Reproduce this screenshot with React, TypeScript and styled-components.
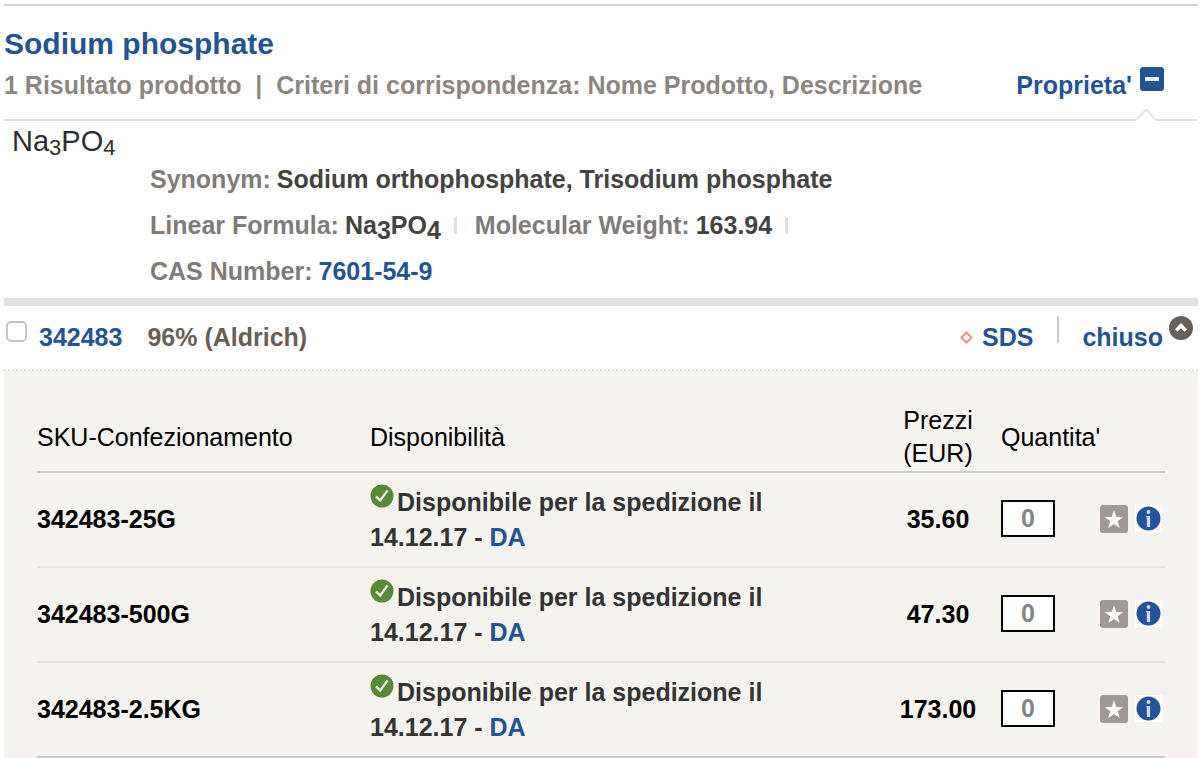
import React from "react";
import styled, { createGlobalStyle } from "styled-components";

const blue = "#1f5597";

const GlobalStyle = createGlobalStyle`
  *, *::before, *::after { box-sizing: border-box; }
  body {
    margin: 0;
    background: #fff;
    color: #000;
    font-family: "Liberation Sans", Arial, Helvetica, sans-serif;
    font-size: 25px;
    line-height: 30px;
  }
`;

const Page = styled.main`
  margin: 4px 2px 0 4px;
  border-top: 2px solid #d2d2d2;
`;

const Header = styled.header`
  position: relative;
  padding: 20px 34px 19px 0;
  border-bottom: 2px solid #e0e0df;
`;

const Title = styled.h1`
  margin: 0 0 8px;
  font-size: 30px;
  line-height: 36px;
  color: ${blue};
`;

const SummaryRow = styled.div`
  display: flex;
  justify-content: space-between;
  align-items: flex-start;
`;

const Summary = styled.p`
  margin: 0;
  font-weight: bold;
  color: #8b8682;
  white-space: pre-wrap;
`;

const Link = styled.a`
  color: ${blue};
  font-weight: bold;
  text-decoration: none;
`;

const ToggleButton = styled.button<{ $gap: number; $lift: number }>`
  display: flex;
  align-items: flex-start;
  gap: ${(p) => p.$gap}px;
  padding: 0;
  border: 0;
  background: none;
  font: inherit;
  font-weight: bold;
  color: ${blue};
  cursor: pointer;

  svg {
    flex: none;
    margin-top: -${(p) => p.$lift}px;
  }
`;

const Notch = styled.svg`
  position: absolute;
  right: 42px;
  bottom: -2px;
`;

const Properties = styled.section`
  display: flex;
  padding-bottom: 12px;
  border-bottom: 8px solid #e1e0de;
`;

const Structure = styled.div`
  flex: none;
  width: 146px;
  padding: 4px 0 0 8px;
  font-size: 29px;
  line-height: 32px;
  color: #2d2d2d;

  sub {
    font-size: 22px;
    line-height: 0;
    vertical-align: -4px;
  }
`;

const PropertyList = styled.dl`
  display: flex;
  flex-direction: column;
  gap: 16px;
  margin: 0;
  padding-top: 43px;
  font-weight: bold;
`;

const PropertyLine = styled.div`
  display: flex;
  align-items: center;
`;

const Property = styled.div`
  display: flex;
  gap: 6px;

  dt { color: #7f7b78; }
  dd { margin: 0; color: #454341; }
  sub {
    font-size: 25px;
    line-height: 0;
    vertical-align: -5px;
  }
`;

const Divider = styled.span`
  width: 3px;
  height: 17px;
  margin: 0 18px 0 13px;
  background: #e0e0e0;
`;

const ProductBar = styled.section`
  display: flex;
  align-items: flex-start;
  justify-content: space-between;
  padding: 16px 5px 17px 2px;
  border-bottom: 2px dotted #e0dfdb;
`;

const ProductName = styled.div`
  display: flex;
  align-items: flex-start;
`;

const Checkbox = styled.input`
  appearance: none;
  width: 21px;
  height: 21px;
  margin: -1px 12px 0 0;
  border: 2px solid #c4c4c4;
  border-radius: 5px;
  background: #fff;
`;

const Grade = styled.span`
  margin-left: 25px;
  font-weight: bold;
  color: #665e57;
`;

const ProductActions = styled.div`
  display: flex;
  align-items: flex-start;
`;

const Diamond = styled.svg`
  margin: 9px 9px 0 0;
`;

const Rule = styled.span`
  width: 2px;
  height: 27px;
  margin: -6px 23px 0 24px;
  background: #cbcbcb;
`;

const Offers = styled.section`
  padding: 33px 33px 0;
  background: #f4f3ef;
`;

const Table = styled.table`
  width: 100%;
  table-layout: fixed;
  border-spacing: 0;
`;

const Col = styled.col<{ $width?: number }>`
  width: ${(p) => (p.$width ? `${p.$width}px` : "auto")};
`;

const HeadCell = styled.th<{ $center?: boolean; $indent?: number }>`
  padding: 0 0 1px ${(p) => p.$indent ?? 0}px;
  border-bottom: 2px solid #cacaca;
  font-weight: normal;
  line-height: 33px;
  text-align: ${(p) => (p.$center ? "center" : "left")};
`;

const Row = styled.tr`
  height: 95px;

  td { border-bottom: 2px solid #e5e4e2; }
  &:last-child td { border-bottom-color: #cacaca; }
`;

const Cell = styled.td<{ $center?: boolean; $indent?: number }>`
  padding: 0 0 2px ${(p) => p.$indent ?? 0}px;
  font-weight: bold;
  text-align: ${(p) => (p.$center ? "center" : "left")};
`;

const Availability = styled(Cell)`
  padding: 0;
  line-height: 35px;
  color: #333;

  svg {
    margin-right: 3px;
    vertical-align: 3px;
  }
`;

const AvailabilityLine = styled.div`
  white-space: nowrap;
`;

const Quantity = styled.input`
  display: block;
  width: 54px;
  height: 37px;
  padding: 0;
  border: 2px solid #000;
  border-radius: 0;
  background: #fff;
  color: #858585;
  font: inherit;
  text-align: center;
`;

const RowTools = styled.div`
  display: flex;
  align-items: center;
  gap: 7px;
`;

const IconButton = styled.button`
  display: block;
  padding: 0;
  border: 0;
  background: none;
  cursor: pointer;

  svg { display: block; }
`;

const MinusIcon = () => (
  <svg width="24" height="24" viewBox="0 0 24 24" aria-hidden="true">
    <rect width="24" height="24" rx="3" fill={blue} />
    <rect x="5" y="10" width="14" height="4" rx="0.5" fill="#e9eef5" />
  </svg>
);

const CollapseIcon = () => (
  <svg width="24" height="24" viewBox="0 0 24 24" aria-hidden="true">
    <circle cx="12" cy="12" r="12" fill="#675f59" />
    <path d="M7.2 14.6 12 9.6l4.8 5" fill="none" stroke="#fff" strokeWidth="3.6" />
  </svg>
);

const CheckIcon = () => (
  <svg width="24" height="24" viewBox="0 0 24 24" role="img" aria-label="Disponibile">
    <circle cx="12" cy="12" r="11.5" fill="#578a32" />
    <path d="M6 12.300l4.200 4.200L17.600 6.400" fill="none" stroke="#e9f0e0" strokeWidth="2.4" />
  </svg>
);

const StarIcon = () => (
  <svg width="28" height="28" viewBox="0 0 28 28" aria-hidden="true">
    <rect width="28" height="28" rx="3" fill="#a09a96" />
    <path
      d="M14 5.200l2.300 6.700 6.900.1-5.500 4.200 2 6.800L14 19l-5.700 4 2-6.800-5.500-4.200 6.900-.1z"
      fill="#fff"
    />
  </svg>
);

const InfoIcon = () => (
  <svg width="27" height="27" viewBox="0 0 27 27" aria-hidden="true">
    <rect width="27" height="27" fill="#fff" />
    <circle cx="13.500" cy="13.500" r="12" fill="#24539d" />
    <circle cx="13.500" cy="7" r="1.900" fill="#d3dded" />
    <path d="M11.300 11h3.800v11h-3.200v-9.400h-.6z" fill="#d3dded" />
  </svg>
);

const offers = [
  { sku: "342483-25G", price: "35.60" },
  { sku: "342483-500G", price: "47.30" },
  { sku: "342483-2.5KG", price: "173.00" },
];

const Formula = () => (
  <>
    Na<sub>3</sub>PO<sub>4</sub>
  </>
);

export default function App() {
  return (
    <>
      <GlobalStyle />
      <Page>
        <Header>
          <Title>Sodium phosphate</Title>
          <SummaryRow>
            <Summary>
              {"1 Risultato prodotto  |  Criteri di corrispondenza: Nome Prodotto, Descrizione"}
            </Summary>
            <ToggleButton type="button" $gap={8} $lift={3}>
              Proprieta'
              <MinusIcon />
            </ToggleButton>
          </SummaryRow>
          <Notch width="20" height="13" viewBox="0 0 20 13" aria-hidden="true">
            <path d="M0 11 10 1l10 10v2H0z" fill="#fff" />
            <path d="M0.500 11.500 10 1.500l9.500 10" fill="none" stroke="#dcdcda" strokeWidth="1.500" />
          </Notch>
        </Header>

        <Properties>
          <Structure>
            <Formula />
          </Structure>
          <PropertyList>
            <PropertyLine>
              <Property>
                <dt>Synonym:</dt>
                <dd>Sodium orthophosphate, Trisodium phosphate</dd>
              </Property>
            </PropertyLine>
            <PropertyLine>
              <Property>
                <dt>Linear Formula:</dt>
                <dd>
                  <Formula />
                </dd>
              </Property>
              <Divider />
              <Property>
                <dt>Molecular Weight:</dt>
                <dd>163.94</dd>
              </Property>
              <Divider />
            </PropertyLine>
            <PropertyLine>
              <Property>
                <dt>CAS Number:</dt>
                <dd>
                  <Link href="#cas">7601-54-9</Link>
                </dd>
              </Property>
            </PropertyLine>
          </PropertyList>
        </Properties>

        <ProductBar>
          <ProductName>
            <Checkbox type="checkbox" id="product" aria-labelledby="product-number" />
            <Link href="#product" id="product-number">
              342483
            </Link>
            <Grade>96% (Aldrich)</Grade>
          </ProductName>
          <ProductActions>
            <Diamond width="13" height="13" viewBox="0 0 13 13" aria-hidden="true">
              <path d="M6.500 1.500l5 5-5 5-5-5z" fill="#fff" stroke="#f58b87" strokeWidth="2" />
            </Diamond>
            <Link href="#sds">SDS</Link>
            <Rule />
            <ToggleButton type="button" $gap={6} $lift={6}>
              chiuso
              <CollapseIcon />
            </ToggleButton>
          </ProductActions>
        </ProductBar>

        <Offers>
          <Table>
            <colgroup>
              <Col $width={333} />
              <Col />
              <Col $width={100} />
              <Col $width={112} />
              <Col $width={65} />
            </colgroup>
            <thead>
              <tr>
                <HeadCell scope="col">SKU-Confezionamento</HeadCell>
                <HeadCell scope="col">Disponibilità</HeadCell>
                <HeadCell scope="col" $center>
                  Prezzi (EUR)
                </HeadCell>
                <HeadCell scope="col" $indent={13}>
                  Quantita'
                </HeadCell>
                <HeadCell as="td" />
              </tr>
            </thead>
            <tbody>
              {offers.map(({ sku, price }) => (
                <Row key={sku}>
                  <Cell>{sku}</Cell>
                  <Availability>
                    <AvailabilityLine>
                      <CheckIcon />
                      Disponibile per la spedizione il
                    </AvailabilityLine>
                    <AvailabilityLine>
                      14.12.17 - <Link href="#da">DA</Link>
                    </AvailabilityLine>
                  </Availability>
                  <Cell $center>{price}</Cell>
                  <Cell $indent={13}>
                    <Quantity type="text" defaultValue="0" aria-label={`Quantita' ${sku}`} />
                  </Cell>
                  <Cell>
                    <RowTools>
                      <IconButton type="button" aria-label="Preferiti">
                        <StarIcon />
                      </IconButton>
                      <IconButton type="button" aria-label="Informazioni">
                        <InfoIcon />
                      </IconButton>
                    </RowTools>
                  </Cell>
                </Row>
              ))}
            </tbody>
          </Table>
        </Offers>
      </Page>
    </>
  );
}
